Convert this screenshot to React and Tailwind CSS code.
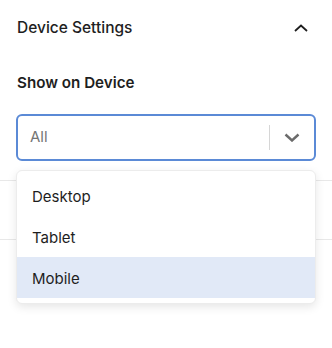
import React from 'react'

function ChevronUp(){
  return (
    <svg width="14" height="8" viewBox="0 0 14 8" fill="none">
      <path d="M1 7L7 1.5L13 7" stroke="#1e1e1e" strokeWidth="1.8" />
    </svg>
  )
}

function ChevronDown(){
  return (
    <svg width="16" height="9" viewBox="0 0 16 9" fill="none">
      <path d="M1.5 1.5L8 7.5L14.5 1.5" stroke="#6b6b6b" strokeWidth="2.4" />
    </svg>
  )
}

export default function App(){
  const items = ['Desktop', 'Tablet', 'Mobile']
  return (
    <div className="w-[332px] h-[348px] bg-white relative text-[#1e1e1e]" style={{ fontFamily: 'Inter, "Noto Sans", sans-serif' }}>
      <div className="px-4 border-b border-[#e8e8e8] h-[181px]">
        <div className="flex items-center justify-between h-[56px] pl-[1px] pr-[8px]">
          <span className="text-[15.5px] font-medium">Device Settings</span>
          <ChevronUp />
        </div>
        <div className="pl-[1px] text-[15.2px] font-semibold leading-[20px] mt-[17px]">Show on Device</div>
        <div className="relative mt-[21px]">
          <div className="h-[47px] border-2 border-[#5b8ad6] rounded-[6px] flex items-center">
            <span className="flex-1 pl-[12px] text-[15px] text-[#757575]">All</span>
            <span className="w-px h-[25px] bg-[#d6d6d6]"></span>
            <span className="w-[44px] flex justify-center"><ChevronDown /></span>
          </div>
          <div className="absolute left-0 right-0 top-[56px] z-10 bg-white rounded-[6px] border border-[#ececec] shadow-[0_3px_10px_rgba(0,0,0,0.10)] pt-[4px] pb-[5px] overflow-hidden">
            {items.map((it) => (
              <div key={it} className={`h-[41px] flex items-center pl-[15px] pt-[3px] text-[15px] ${it === 'Mobile' ? 'bg-[#e1e9f7]' : ''}`}>
                {it}
              </div>
            ))}
          </div>
        </div>
      </div>
      <div className="h-[59px] border-b border-[#e8e8e8]"></div>
    </div>
  )
}
